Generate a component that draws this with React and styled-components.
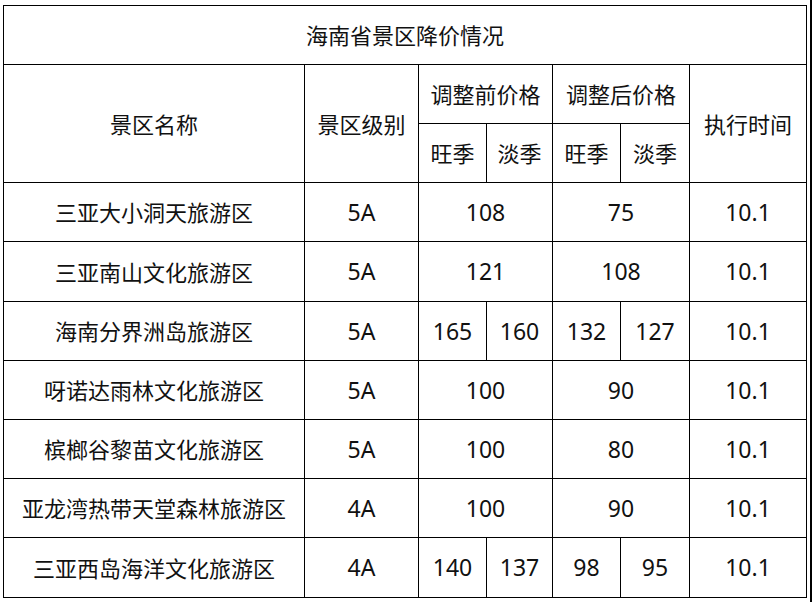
import React from "react";
import styled, { createGlobalStyle } from "styled-components";

const Global = createGlobalStyle`
  html, body { margin: 0; padding: 0; background: #fff; }
  body { font-family: "Noto Sans", "Noto Sans CJK SC", sans-serif; }
`;

const Page = styled.div`
  width: 812px;
  height: 602px;
  box-sizing: border-box;
  padding: 5px 0 0 3px;
  border-right: 2px solid #000;
  display: flex;
  align-items: flex-start;
  overflow: hidden;
`;

const Table = styled.table`
  border-collapse: collapse;
  table-layout: fixed;
  width: 804px;
  color: #111;
  font-size: 22px;
  font-family: "Noto Sans", "Noto Sans CJK SC", sans-serif;
`;

const Row = styled.tr`
  height: ${(p) => p.$h || 59}px;
`;

const Cell = styled.td`
  border: 1px solid #000;
  padding: 0;
  text-align: center;
  vertical-align: middle;
  white-space: nowrap;
  line-height: 1;
  font-size: ${(p) => (p.$num ? "23px" : "22px")};
`;

const widths = [301, 114, 68, 66, 68, 69, 117];

const rows = [
  { name: "三亚大小洞天旅游区", level: "5A", before: ["108"], after: ["75"], h: 59 },
  { name: "三亚南山文化旅游区", level: "5A", before: ["121"], after: ["108"], h: 60 },
  { name: "海南分界洲岛旅游区", level: "5A", before: ["165", "160"], after: ["132", "127"], h: 59 },
  { name: "呀诺达雨林文化旅游区", level: "5A", before: ["100"], after: ["90"], h: 59 },
  { name: "槟榔谷黎苗文化旅游区", level: "5A", before: ["100"], after: ["80"], h: 59 },
  { name: "亚龙湾热带天堂森林旅游区", level: "4A", before: ["100"], after: ["90"], h: 59 },
  { name: "三亚西岛海洋文化旅游区", level: "4A", before: ["140", "137"], after: ["98", "95"], h: 60 },
];

const PriceCells = ({ values }) =>
  values.length === 1 ? (
    <Cell $num colSpan={2}>{values[0]}</Cell>
  ) : (
    <>
      <Cell $num>{values[0]}</Cell>
      <Cell $num>{values[1]}</Cell>
    </>
  );

export default function App() {
  return (
    <>
      <Global />
      <Page>
        <Table>
          <colgroup>
            {widths.map((w, i) => (
              <col key={i} style={{ width: w }} />
            ))}
          </colgroup>
          <tbody>
            <Row $h={59}>
              <Cell colSpan={7}>海南省景区降价情况</Cell>
            </Row>
            <Row $h={59}>
              <Cell rowSpan={2}>景区名称</Cell>
              <Cell rowSpan={2}>景区级别</Cell>
              <Cell colSpan={2}>调整前价格</Cell>
              <Cell colSpan={2}>调整后价格</Cell>
              <Cell rowSpan={2}>执行时间</Cell>
            </Row>
            <Row $h={59}>
              <Cell>旺季</Cell>
              <Cell>淡季</Cell>
              <Cell>旺季</Cell>
              <Cell>淡季</Cell>
            </Row>
            {rows.map((r) => (
              <Row key={r.name} $h={r.h}>
                <Cell>{r.name}</Cell>
                <Cell $num>{r.level}</Cell>
                <PriceCells values={r.before} />
                <PriceCells values={r.after} />
                <Cell $num>10.1</Cell>
              </Row>
            ))}
          </tbody>
        </Table>
      </Page>
    </>
  );
}
